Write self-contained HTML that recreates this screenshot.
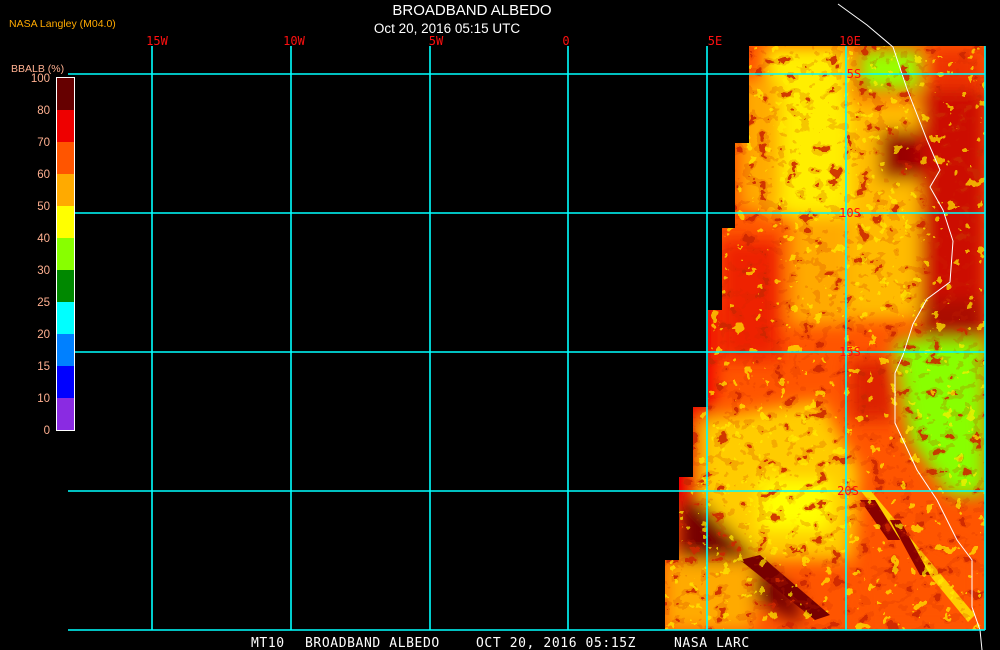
<!DOCTYPE html>
<html><head><meta charset="utf-8"><style>
html,body{margin:0;padding:0;background:#000;width:1000px;height:650px;overflow:hidden}
svg{display:block}
</style></head><body>
<svg width="1000" height="650" viewBox="0 0 1000 650" xmlns="http://www.w3.org/2000/svg" font-family="Liberation Sans, sans-serif">
<defs>
<clipPath id="cp"><polygon points="749,46 985,46 985,630 665,630 665,560 679,560 679,477 693,477 693,407 708,407 708,310 722,310 722,228 735,228 735,143 749,143"/></clipPath>
<filter id="tx" x="0" y="0" width="100%" height="100%">
<feTurbulence type="fractalNoise" baseFrequency="0.07 0.09" numOctaves="3" seed="4"/>
<feColorMatrix type="matrix" values="0 0 0 0 0.6  0 0 0 0 0.02  0 0 0 0 0  1.5 0 0 0 -0.25"/>
<feComponentTransfer><feFuncA type="discrete" tableValues="0 0 0 0.2 0.9"/></feComponentTransfer>
</filter>
<filter id="tx2" x="0" y="0" width="100%" height="100%">
<feTurbulence type="fractalNoise" baseFrequency="0.09" numOctaves="3" seed="9"/>
<feColorMatrix type="matrix" values="0 0 0 0 1  0 0 0 0 0.85  0 0 0 0 0  0 1.5 0 0 -0.25"/>
<feComponentTransfer><feFuncA type="discrete" tableValues="0 0 0 0 0.7"/></feComponentTransfer>
</filter>
<filter id="bl"><feGaussianBlur stdDeviation="8"/></filter>
</defs>
<g clip-path="url(#cp)">
<rect x="660" y="40" width="330" height="600" fill="#ff5500"/>
<g filter="url(#bl)">
<rect x="665" y="300" width="50" height="200" fill="#ee0000"/>
<rect x="765" y="46" width="85" height="170" fill="#ffee00"/>
<rect x="740" y="80" width="40" height="130" fill="#ffaa00"/>
<rect x="790" y="215" width="60" height="110" fill="#ffaa00"/>
<rect x="720" y="240" width="60" height="120" fill="#ee2200"/>
<rect x="850" y="100" width="70" height="220" fill="#ffbb00"/>
<rect x="860" y="50" width="60" height="40" fill="#99ff00"/>
<rect x="920" y="90" width="65" height="230" fill="#cc1100"/>
<rect x="880" y="130" width="40" height="50" fill="#990000"/>
<rect x="930" y="50" width="50" height="40" fill="#ee3300"/>
<polygon points="895,340 985,340 985,495 950,495 910,440" fill="#88ff00"/>
<rect x="920" y="300" width="65" height="40" fill="#aa1100"/>
<rect x="850" y="360" width="45" height="60" fill="#dd2200"/>
<polygon points="700,420 820,400 860,470 850,560 700,560" fill="#ffcc00"/>
<rect x="760" y="480" width="70" height="50" fill="#ffff00"/>
<polygon points="680,500 700,500 800,600 800,625 680,560" fill="#770000"/>
<polygon points="855,500 980,560 980,630 860,630" fill="#ff5500"/>
<rect x="665" y="560" width="90" height="70" fill="#ffaa00"/>
</g>
<polygon points="860,490 870,490 975,615 968,622" fill="#ffee00" opacity="0.8"/>
<polygon points="890,520 900,520 930,575 920,575" fill="#880000"/>
<polygon points="860,500 875,500 900,540 888,540" fill="#880000"/>
<polygon points="740,560 760,555 830,615 815,620" fill="#770000"/>
<rect x="660" y="40" width="330" height="600" filter="url(#tx)"/>
<rect x="660" y="40" width="330" height="600" filter="url(#tx2)"/>
</g>
<polyline points="838,4 867,25 893,47 907,89 927,140 940,170 930,187 943,210 953,241 950,282 927,299 913,324 903,355 895,373 895,423 917,470 937,500 957,540 972,560 972,607 980,630 982,650" fill="none" stroke="#fff" stroke-width="1"/>
<g stroke="#00ffff" stroke-width="1.6">
<line x1="68" y1="74" x2="985" y2="74"/>
<line x1="68" y1="213" x2="985" y2="213"/>
<line x1="68" y1="352" x2="985" y2="352"/>
<line x1="68" y1="491" x2="985" y2="491"/>
<line x1="68" y1="630" x2="985" y2="630"/>
<line x1="152" y1="46" x2="152" y2="630"/>
<line x1="291" y1="46" x2="291" y2="630"/>
<line x1="430" y1="46" x2="430" y2="630"/>
<line x1="568" y1="46" x2="568" y2="630"/>
<line x1="707" y1="46" x2="707" y2="630"/>
<line x1="846" y1="46" x2="846" y2="630"/>
<line x1="985" y1="46" x2="985" y2="630"/>
</g>
<g fill="#ff1010" font-size="12" font-family="DejaVu Sans Mono, monospace" text-anchor="middle">
<text x="157" y="45">15W</text><text x="294" y="45">10W</text><text x="436" y="45">5W</text><text x="566" y="45">0</text><text x="715" y="45">5E</text><text x="850" y="45">10E</text>
<text x="854" y="78">5S</text><text x="850" y="217">10S</text><text x="850" y="356">15S</text><text x="848" y="495">20S</text>
</g>
<text x="472" y="15" fill="#fff" font-size="15" text-anchor="middle">BROADBAND ALBEDO</text>
<text x="447" y="33" fill="#fff" font-size="13.5" text-anchor="middle">Oct 20, 2016 05:15 UTC</text>
<text x="9" y="27" fill="#ffaa00" font-size="10.5">NASA Langley (M04.0)</text>
<text x="11" y="72" fill="#ffb090" font-size="10.5">BBALB (%)</text>
<g shape-rendering="crispEdges">
<rect x="56" y="77" width="18" height="33" fill="#660000"/>
<rect x="56" y="110" width="18" height="32" fill="#ee0000"/>
<rect x="56" y="142" width="18" height="32" fill="#ff5500"/>
<rect x="56" y="174" width="18" height="32" fill="#ffaa00"/>
<rect x="56" y="206" width="18" height="32" fill="#ffff00"/>
<rect x="56" y="238" width="18" height="32" fill="#88ff00"/>
<rect x="56" y="270" width="18" height="32" fill="#008800"/>
<rect x="56" y="302" width="18" height="32" fill="#00ffff"/>
<rect x="56" y="334" width="18" height="32" fill="#0080ff"/>
<rect x="56" y="366" width="18" height="32" fill="#0000ff"/>
<rect x="56" y="398" width="18" height="32" fill="#8a2be2"/>
<rect x="56.5" y="77.5" width="18" height="353" fill="none" stroke="#fff" stroke-width="1"/>
</g>
<g fill="#ffb090" font-size="11.5" text-anchor="end">
<text x="50" y="82">100</text><text x="50" y="114">80</text><text x="50" y="146">70</text><text x="50" y="178">60</text><text x="50" y="210">50</text><text x="50" y="242">40</text><text x="50" y="274">30</text><text x="50" y="306">25</text><text x="50" y="338">20</text><text x="50" y="370">15</text><text x="50" y="402">10</text><text x="50" y="434">0</text>
</g>
<g fill="#fff" font-size="13" font-family="DejaVu Sans Mono, monospace" letter-spacing="0.6">
<text x="251" y="647">MT10</text>
<text x="305" y="647">BROADBAND ALBEDO</text>
<text x="476" y="647">OCT 20, 2016 05:15Z</text>
<text x="674" y="647">NASA LARC</text>
</g>
</svg>
</body></html>
